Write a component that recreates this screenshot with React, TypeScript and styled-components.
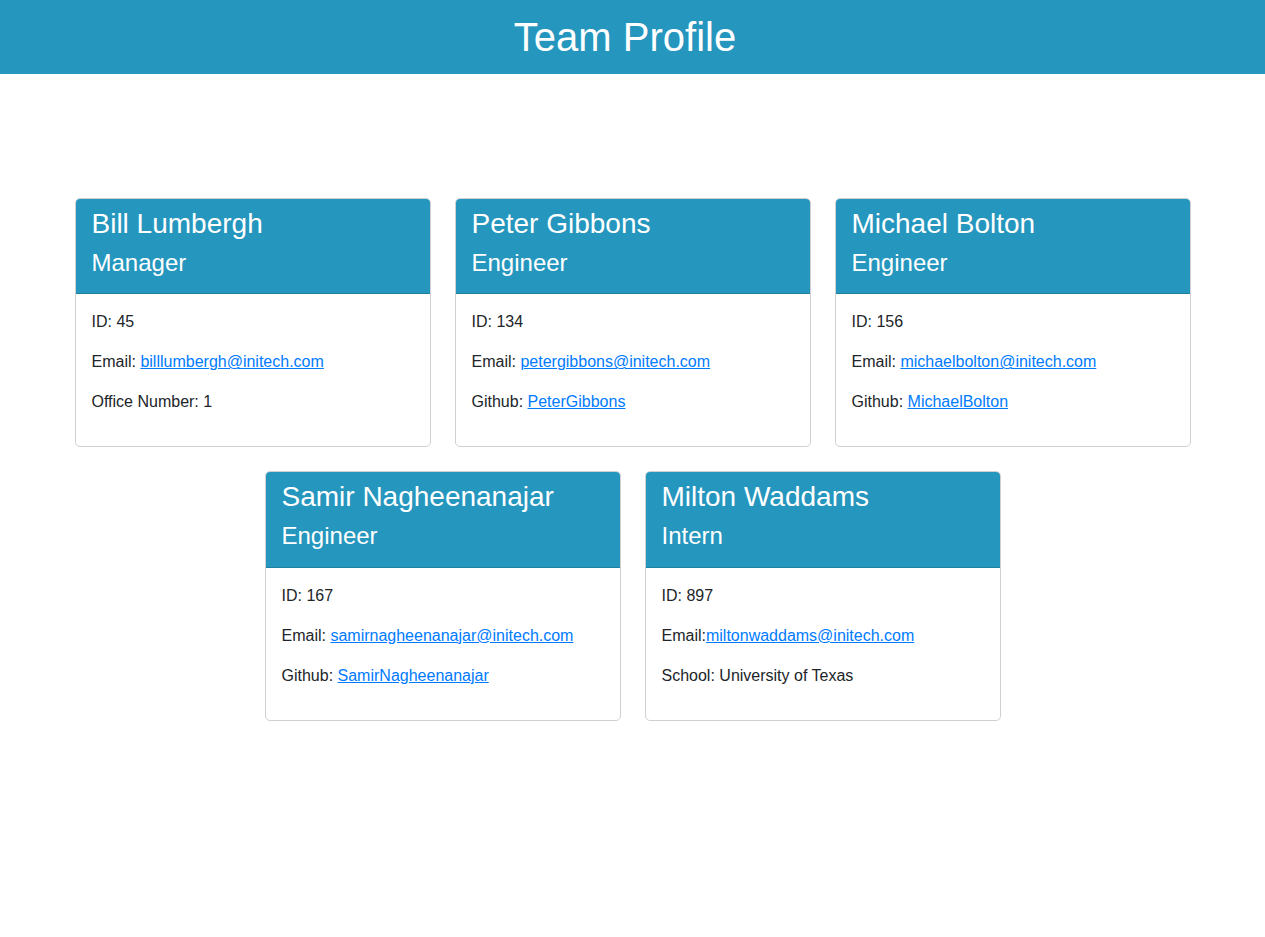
import React from "react";
import styled, { createGlobalStyle } from "styled-components";

const Global = createGlobalStyle`
  html, body { margin: 0; padding: 0; background: #fff; }
  body {
    font-family: "Liberation Sans", Arial, sans-serif;
    font-size: 16px;
    line-height: 1.5;
    color: #212529;
  }
  * { box-sizing: border-box; }
`;

const TopBar = styled.header`
  background: #2596be;
  height: 74px;
  display: flex;
  align-items: center;
  justify-content: center;
  padding-right: 15px;
`;

const Title = styled.h1`
  margin: 0;
  color: #fff;
  font-size: 40px;
  font-weight: 400;
  line-height: 1.2;
`;

const Grid = styled.main`
  max-width: 1116px;
  margin: 124px auto 0;
  display: flex;
  flex-wrap: wrap;
  justify-content: center;
  column-gap: 24px;
  row-gap: 24px;
`;

const Card = styled.section`
  width: 356px;
  border: 1px solid #d0d0d0;
  border-radius: 5px;
  background: #fff;
  overflow: hidden;
`;

const CardHeader = styled.div`
  background: #2596be;
  color: #fff;
  padding: 8px 16px;
  border-bottom: 1px solid rgba(0, 0, 0, 0.15);
`;

const Name = styled.h3`
  margin: 0 0 8px;
  font-size: 28px;
  font-weight: 400;
  line-height: 1.2;
`;

const Role = styled.h4`
  margin: 0 0 8px;
  font-size: 24px;
  font-weight: 400;
  line-height: 1.2;
`;

const CardBody = styled.div`
  padding: 16px;
`;

const Line = styled.p`
  margin: 0 0 16px;
`;

const Link = styled.a`
  color: #007bff;
  text-decoration: underline;
`;

type Member = {
  name: string;
  role: string;
  id: number;
  email: string;
  emailSep?: string;
  extraLabel: string;
  extra: string;
  extraLink?: boolean;
};

const members: Member[] = [
  { name: "Bill Lumbergh", role: "Manager", id: 45, email: "billlumbergh@initech.com", extraLabel: "Office Number", extra: "1" },
  { name: "Peter Gibbons", role: "Engineer", id: 134, email: "petergibbons@initech.com", extraLabel: "Github", extra: "PeterGibbons", extraLink: true },
  { name: "Michael Bolton", role: "Engineer", id: 156, email: "michaelbolton@initech.com", extraLabel: "Github", extra: "MichaelBolton", extraLink: true },
  { name: "Samir Nagheenanajar", role: "Engineer", id: 167, email: "samirnagheenanajar@initech.com", extraLabel: "Github", extra: "SamirNagheenanajar", extraLink: true },
  { name: "Milton Waddams", role: "Intern", id: 897, email: "miltonwaddams@initech.com", emailSep: "", extraLabel: "School", extra: "University of Texas" },
];

export default function App() {
  return (
    <>
      <Global />
      <TopBar>
        <Title>Team Profile</Title>
      </TopBar>
      <Grid>
        {members.map((m) => (
          <Card key={m.id}>
            <CardHeader>
              <Name>{m.name}</Name>
              <Role>{m.role}</Role>
            </CardHeader>
            <CardBody>
              <Line>ID: {m.id}</Line>
              <Line>
                Email:{m.emailSep ?? " "}
                <Link href={`mailto:${m.email}`}>{m.email}</Link>
              </Line>
              <Line>
                {m.extraLabel}:{" "}
                {m.extraLink ? <Link href="#">{m.extra}</Link> : m.extra}
              </Line>
            </CardBody>
          </Card>
        ))}
      </Grid>
    </>
  );
}
